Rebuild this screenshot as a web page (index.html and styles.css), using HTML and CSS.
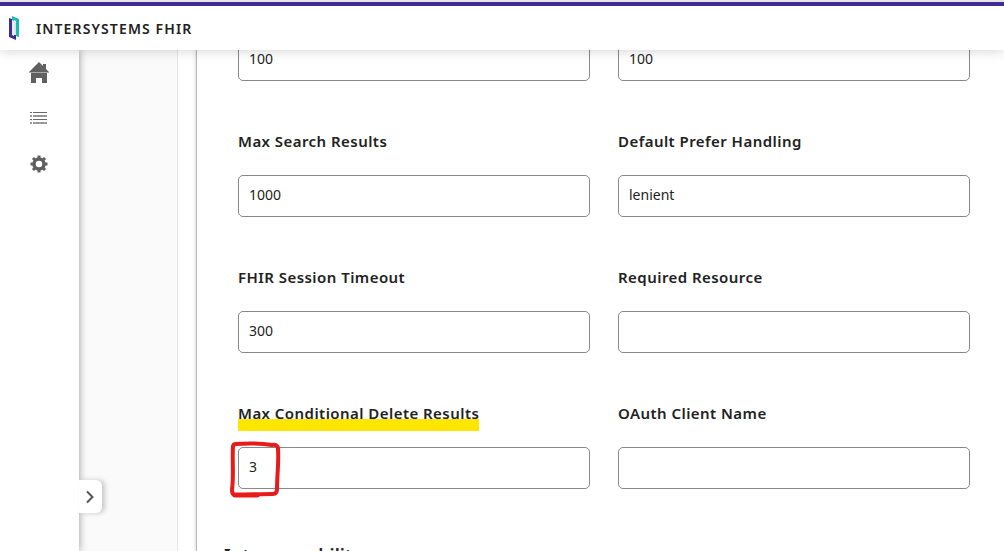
FILE: index.html
```html
<!DOCTYPE html>
<html lang="en">
<head>
    <meta charset="UTF-8">
    <meta name="viewport" content="width=device-width, initial-scale=1.0">
    <title>InterSystems FHIR</title>
    <link rel="stylesheet" href="styles.css">
</head>
<body>
    <header class="topbar">
        <svg class="logo" width="12" height="26" viewBox="0 0 12 26">
            <path d="M4 5 V1 L11 4 V22 L8 21 V6 L6 5 V6 Z" fill="#16bdb5"/>
            <path d="M1 3 L4 4 V20 L6 21 V20 H8 V25 L1 22 Z" fill="#3f2d91"/>
            <path d="M5 5 V20" stroke="#16bdb5" stroke-opacity="0.3"/>
            <path d="M7 6 V20" stroke="#3f2d91" stroke-opacity="0.3"/>
        </svg>
        <h1>INTERSYSTEMS FHIR</h1>
    </header>

    <div class="page">
        <nav class="sidebar">
            <a href="#" aria-label="Home">
                <svg width="22" height="22" viewBox="0 0 22 22" fill="#606060">
                    <path d="M1 11 L11 1 L15 5 V3 H18 V8 L21 11 Z"/>
                    <path d="M3 12 H19 V22 H14 V17 H8 V22 H3 Z"/>
                    <path d="M1 11 H21 V12 H1 Z" fill="#a8a8a8"/>
                </svg>
            </a>
            <a href="#" aria-label="List">
                <svg width="18" height="22" viewBox="0 0 18 22" fill="#686868">
                    <path d="M0 5h2v1H0z M3 5h14v1H3z M0 12h2v1H0z M3 12h14v1H3z"/>
                    <path d="M0 8h2v2H0z M3 8h14v2H3z M0 15h2v2H0z M3 15h14v2H3z" fill="#999"/>
                </svg>
            </a>
            <a href="#" aria-label="Settings">
                <svg width="18" height="22" viewBox="-9 -11 18 22">
                    <circle r="5" fill="none" stroke="#606060" stroke-width="3.500"/>
                    <path d="M0 -6V-8.500 M0 6V8.500 M-6 0H-8.500 M6 0H8.500 M-4 -4L-6 -6 M4 -4L6 -6 M-4 4L-6 6 M4 4L6 6" stroke="#606060" stroke-width="3"/>
                </svg>
            </a>
            <button type="button" class="expand" aria-label="Expand menu">
                <svg width="10" height="14" viewBox="0 0 10 14">
                    <path d="M2 1.500 L7.500 7 L2 12.500" fill="none" stroke="#555" stroke-width="2"/>
                </svg>
            </button>
        </nav>

        <div class="gutter"></div>

        <main class="content">
            <form class="settings">
                <div class="fields">
                    <input type="text" value="100" aria-label="Value 1">
                    <input type="text" value="100" aria-label="Value 2">

                    <div class="field">
                        <label for="maxSearch">Max Search Results</label>
                        <input type="text" id="maxSearch" value="1000">
                    </div>
                    <div class="field">
                        <label for="prefer">Default Prefer Handling</label>
                        <input type="text" id="prefer" value="lenient">
                    </div>

                    <div class="field">
                        <label for="timeout">FHIR Session Timeout</label>
                        <input type="text" id="timeout" value="300">
                    </div>
                    <div class="field">
                        <label for="required">Required Resource</label>
                        <input type="text" id="required">
                    </div>

                    <div class="field marked">
                        <label for="maxDelete">Max Conditional Delete Results</label>
                        <input type="text" id="maxDelete" value="3">
                        <svg class="circled" width="52" height="58" viewBox="0 0 52 58" fill="none" stroke="#e81b1b" stroke-linecap="round" stroke-linejoin="round">
                            <path d="M4 5 C3 19 5 34 3 49 Q3 54 6 54 C19 54 32 53 44 53 Q48 53 48 48 C48 34 50 21 49 8 Q49 3 43 4 C31 2 19 2 6 3 Q4 3 4 7" stroke-width="4"/>
                            <path d="M6 54 L28 54" stroke-width="5"/>
                        </svg>
                    </div>
                    <div class="field">
                        <label for="oauth">OAuth Client Name</label>
                        <input type="text" id="oauth">
                    </div>
                </div>
                <h2>Interoperability</h2>
            </form>
        </main>
    </div>
</body>
</html>
```

FILE: styles.css
```css
* {
    box-sizing: border-box;
}

body {
    margin: 0;
    height: 100vh;
    display: flex;
    flex-direction: column;
    overflow: hidden;
    font-family: "Noto Sans", sans-serif;
    color: #222;
    background-color: #fff;
    border-top: 2px solid #e4e4e8;
}

.topbar {
    flex: none;
    position: relative;
    z-index: 2;
    display: flex;
    align-items: center;
    gap: 16px;
    height: 48px;
    padding-left: 8px;
    background-color: #fff;
    border-top: 4px solid #3f2d91;
    box-shadow: 0 0 12px rgba(0, 0, 0, 0.2);
}

.topbar h1 {
    margin: 0;
    font-size: 14px;
    font-weight: 600;
    letter-spacing: 0.08em;
}

.page {
    flex: 1;
    min-height: 0;
    display: flex;
}

.sidebar {
    position: relative;
    z-index: 1;
    width: 79px;
    flex: none;
    display: flex;
    flex-direction: column;
    align-items: center;
    gap: 24px;
    padding: 11px 2px 0 0;
    background-color: #fff;
    box-shadow: 0 0 8px rgba(0, 0, 0, 0.4);
}

.sidebar a,
.sidebar svg {
    display: block;
}

.expand {
    position: absolute;
    left: 100%;
    bottom: 38px;
    width: 23px;
    height: 33px;
    padding: 0 0 0 6px;
    border: none;
    border-radius: 0 6px 6px 0;
    background-color: #fff;
    box-shadow: 3px 0 5px rgba(0, 0, 0, 0.2);
    cursor: pointer;
}

.gutter {
    width: 99px;
    flex: none;
    background-color: #fafafa;
    border-right: 1px solid #e6e6e6;
}

.content {
    flex: 1;
    min-width: 0;
    margin-left: 18px;
    overflow: hidden;
    border-left: 1px solid #b8b8b8;
    box-shadow: 0 0 4px rgba(0, 0, 0, 0.2);
}

/* scrolled part way down */
.settings {
    margin-top: -11px;
    padding: 0 34px 0 27px;
}

.fields {
    display: grid;
    grid-template-columns: 1fr 1fr;
    column-gap: 28px;
    row-gap: 48px;
    padding-left: 14px;
}

.field {
    position: relative;
}

label {
    display: block;
    width: fit-content;
    margin-bottom: 16px;
    padding-bottom: 6px;
    font-size: 15px;
    font-weight: 600;
    line-height: 24px;
    letter-spacing: 0.03em;
}

input {
    display: block;
    width: 100%;
    height: 42px;
    padding: 0 10px 4px;
    border: 1px solid #888;
    border-radius: 5px;
    background-color: #fff;
    font-family: inherit;
    font-size: 14px;
    color: #222;
}

.marked label {
    background: linear-gradient(#ffe600, #ffe600) no-repeat 0 100% / 100% 12px;
}

.circled {
    position: absolute;
    left: -9px;
    bottom: -10px;
    pointer-events: none;
}

h2 {
    margin: 54px 0 0;
    font-size: 18px;
    font-weight: 600;
    line-height: 24px;
}
```
